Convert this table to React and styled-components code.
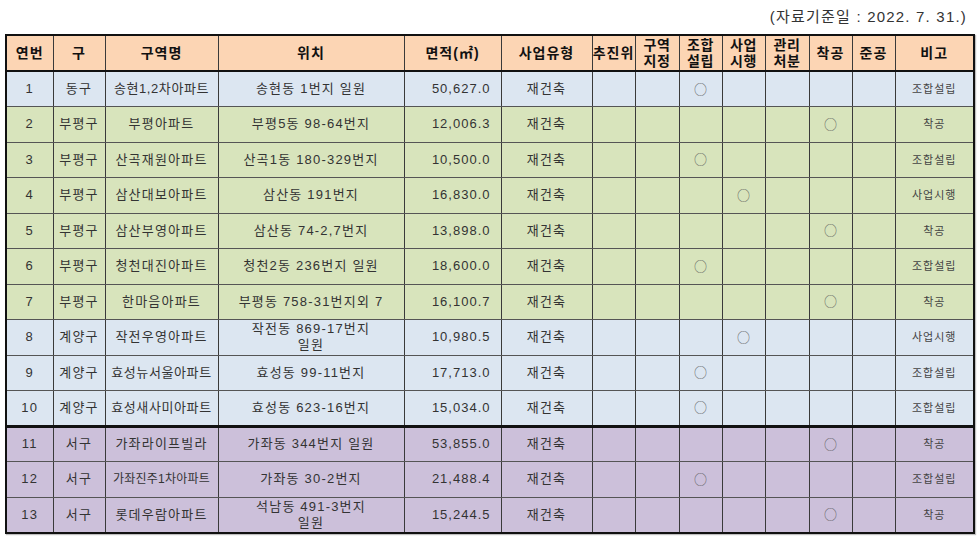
import React from 'react';
import styled, { createGlobalStyle } from 'styled-components';

const GlobalStyle = createGlobalStyle`
    html, body {
        margin: 0;
        padding: 0;
        background: #fff;
    }
    body {
        font-family: "Liberation Sans", "Noto Sans CJK KR", sans-serif;
        color: #333;
    }
`;

// 행 색상 (엑셀 표 배경)
const ROW_COLORS = {
    blue: '#dce6f1',
    green: '#d8e4bc',
    purple: '#ccc0da',
};

const COLUMNS = [
    { title: '연번', width: 47 },
    { title: '구', width: 52 },
    { title: '구역명', width: 113 },
    { title: '위치', width: 186 },
    { title: '면적(㎡)', width: 97 },
    { title: '사업유형', width: 91 },
    { title: '추진위', width: 43 },
    { title: '구역\n지정', width: 44 },
    { title: '조합\n설립', width: 43 },
    { title: '사업\n시행', width: 43 },
    { title: '관리\n처분', width: 44 },
    { title: '착공', width: 43 },
    { title: '준공', width: 43 },
    { title: '비고', width: 79 },
];

// stage: 0 추진위 ... 6 준공
const STAGE_NAMES = ['추진위', '구역지정', '조합설립', '사업시행', '관리처분', '착공', '준공'];

const rows = [
    { no: 1, gu: '동구', name: '송현1,2차아파트', loc: '송현동 1번지 일원', area: '50,627.0', stage: 2, color: 'blue', tight: true },
    { no: 2, gu: '부평구', name: '부평아파트', loc: '부평5동 98-64번지', area: '12,006.3', stage: 5, color: 'green' },
    { no: 3, gu: '부평구', name: '산곡재원아파트', loc: '산곡1동 180-329번지', area: '10,500.0', stage: 2, color: 'green' },
    { no: 4, gu: '부평구', name: '삼산대보아파트', loc: '삼산동 191번지', area: '16,830.0', stage: 3, color: 'green' },
    { no: 5, gu: '부평구', name: '삼산부영아파트', loc: '삼산동 74-2,7번지', area: '13,898.0', stage: 5, color: 'green' },
    { no: 6, gu: '부평구', name: '청천대진아파트', loc: '청천2동 236번지 일원', area: '18,600.0', stage: 2, color: 'green' },
    { no: 7, gu: '부평구', name: '한마음아파트', loc: '부평동 758-31번지외 7', area: '16,100.7', stage: 5, color: 'green' },
    { no: 8, gu: '계양구', name: '작전우영아파트', loc: ['작전동 869-17번지', '일원'], area: '10,980.5', stage: 3, color: 'blue' },
    { no: 9, gu: '계양구', name: '효성뉴서울아파트', loc: '효성동 99-11번지', area: '17,713.0', stage: 2, color: 'blue', tight: true },
    { no: 10, gu: '계양구', name: '효성새사미아파트', loc: '효성동 623-16번지', area: '15,034.0', stage: 2, color: 'blue', tight: true, groupEnd: true },
    { no: 11, gu: '서구', name: '가좌라이프빌라', loc: '가좌동 344번지 일원', area: '53,855.0', stage: 5, color: 'purple' },
    { no: 12, gu: '서구', name: '가좌진주1차아파트', loc: '가좌동 30-2번지', area: '21,488.4', stage: 2, color: 'purple', small: true },
    { no: 13, gu: '서구', name: '롯데우람아파트', loc: ['석남동 491-3번지', '일원'], area: '15,244.5', stage: 5, color: 'purple' },
];

const App = () => {
    return (
        <Page>
            <GlobalStyle />
            <DateNote>(자료기준일 : 2022. 7. 31.)</DateNote>
            <Table>
                <colgroup>
                    {COLUMNS.map((col, i) => (
                        <col key={i} style={{ width: col.width }} />
                    ))}
                </colgroup>
                <thead>
                    <tr>
                        {COLUMNS.map((col, i) => (
                            <HeadCell key={i} $multi={col.title.includes('\n')}>
                                {col.title.split('\n').map((line, j) => (
                                    <HeadLine key={j}>{line}</HeadLine>
                                ))}
                            </HeadCell>
                        ))}
                    </tr>
                </thead>
                <tbody>
                    {rows.map((row) => (
                        <Row key={row.no} $bg={ROW_COLORS[row.color]} $groupEnd={row.groupEnd}>
                            <Cell>{row.no}</Cell>
                            <Cell>{row.gu}</Cell>
                            <NameCell $small={row.small} $tight={row.tight}>{row.name}</NameCell>
                            <Cell>
                                {Array.isArray(row.loc)
                                    ? row.loc.map((line, j) => <CellLine key={j}>{line}</CellLine>)
                                    : row.loc}
                            </Cell>
                            <AreaCell>{row.area}</AreaCell>
                            <Cell>재건축</Cell>
                            {STAGE_NAMES.map((s, i) => (
                                <Cell key={s}>{row.stage === i ? <Mark>○</Mark> : null}</Cell>
                            ))}
                            <NoteCell>{STAGE_NAMES[row.stage]}</NoteCell>
                        </Row>
                    ))}
                </tbody>
            </Table>
        </Page>
    );
};

// Styled Components
const Page = styled.div`
    width: 978px;
    height: 537px;
    padding: 0 5px;
    box-sizing: border-box;
    overflow: hidden;
`;

const DateNote = styled.div`
    height: 34px;
    box-sizing: border-box;
    padding: 5px 6px 0 0;
    text-align: right;
    font-size: 15px;
    color: #333;
    letter-spacing: 1.2px;
`;

const Table = styled.table`
    width: 968px;
    table-layout: fixed;
    border-collapse: collapse;
    border: 2px solid #111;
    box-shadow: 1px 1px 1px rgba(0, 0, 0, 0.25);
`;

const HeadCell = styled.th`
    height: 34px;
    padding: 0;
    background: #fcd5b4;
    border: 1px solid #3a3a3a;
    border-bottom: 2px solid #111;
    font-size: 14px;
    font-weight: bold;
    color: #111;
    text-align: center;
    vertical-align: middle;
    line-height: 16px;
    letter-spacing: ${props => (props.$multi ? '0.5px' : '1px')};
    white-space: nowrap;
`;

const HeadLine = styled.div``;

const Row = styled.tr`
    height: 35.5px;
    background: ${props => props.$bg};

    & > td {
        border-bottom: ${props => (props.$groupEnd ? '3px solid #111' : '1px solid #555')};
    }
`;

const Cell = styled.td`
    padding: 0;
    border-left: 1px solid #3a3a3a;
    border-right: 1px solid #3a3a3a;
    font-size: 13px;
    color: #333;
    text-align: center;
    vertical-align: middle;
    white-space: nowrap;
    line-height: 16px;
    letter-spacing: 1.2px;
`;

const CellLine = styled.div``;

const NameCell = styled(Cell)`
    font-size: ${props => (props.$small ? '12px' : '13px')};
    letter-spacing: ${props => (props.$small ? '0.2px' : props.$tight ? '0.6px' : '1.2px')};
    overflow: hidden;
`;

const AreaCell = styled(Cell)`
    text-align: right;
    padding-right: 10px;
    letter-spacing: 1px;
`;

const NoteCell = styled(Cell)`
    font-size: 11px;
    color: #444;
    letter-spacing: 1px;
`;

const Mark = styled.span`
    font-family: "Noto Sans CJK KR", sans-serif;
    font-size: 13px;
    font-weight: 300;
    color: #555;
    letter-spacing: 0;
`;

export default App;
